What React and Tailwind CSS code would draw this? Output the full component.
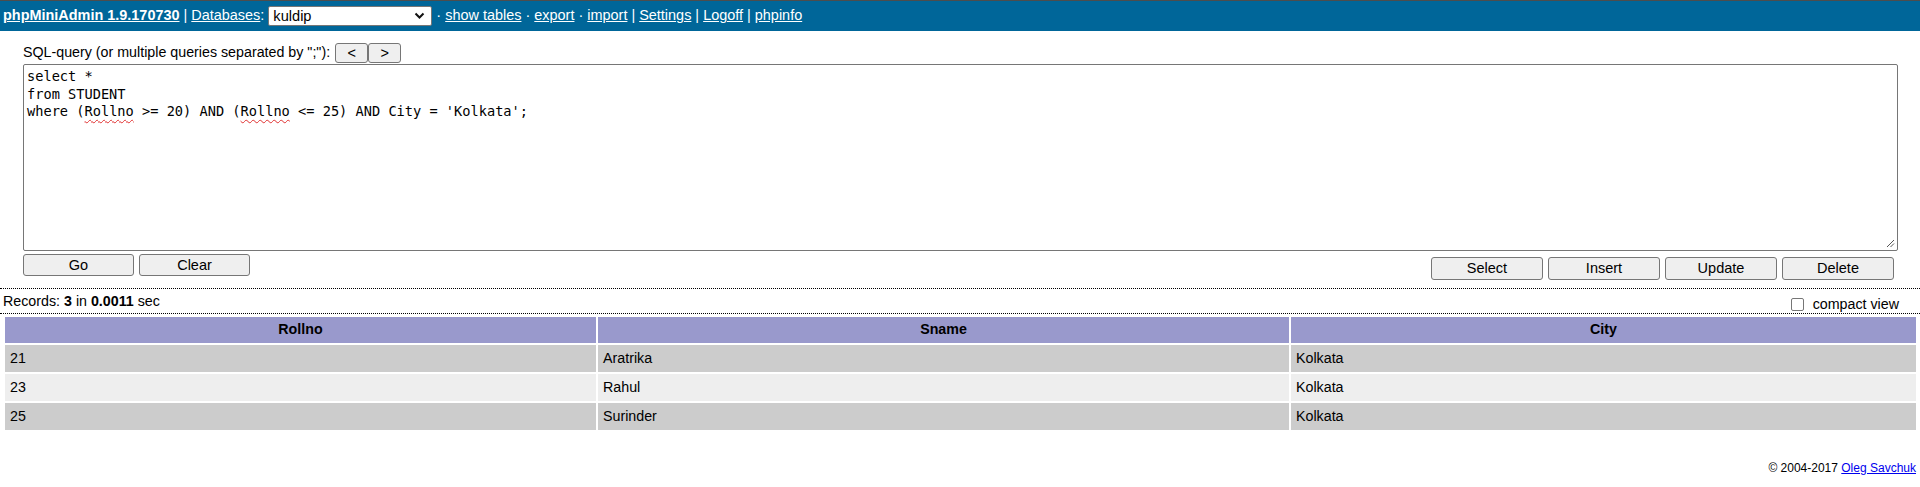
export default function App() {
  const rows = [
    ["21", "Aratrika", "Kolkata", "bg-[#cccccc]"],
    ["23", "Rahul", "Kolkata", "bg-[#eeeeee]"],
    ["25", "Surinder", "Kolkata", "bg-[#cccccc]"],
  ];
  const btn =
    "flex items-center justify-center bg-[#efefef] border border-[#767676] rounded-[3px] text-black text-[14.5px] leading-none";
  const spell = "underline decoration-wavy decoration-[#e03030] decoration-[1px] underline-offset-[3px]";
  return (
    <div className="min-h-[487px] bg-white text-black text-[14.25px] font-['Liberation_Sans',Arial,sans-serif]">
      {/* header bar */}
      <div className="h-[31px] border-t border-[#4d4d4d] bg-[#006699] text-white pl-[3px] leading-[29px] whitespace-nowrap text-[14.45px]">
        <a href="#" className="font-bold underline">phpMiniAdmin 1.9.170730</a> | <a href="#" className="underline">Databases</a>: <span className="relative inline-block align-middle h-[20px] w-[164px] bg-white border border-[#767676] rounded-[2px] text-black text-[14.6px] leading-[18px] pl-[4px]">kuldip<svg className="absolute right-[6px] top-[5px]" width="11" height="8" viewBox="0 0 11 8"><polyline points="1.5,1.5 5.5,5.5 9.5,1.5" fill="none" stroke="#111" strokeWidth="2" /></svg></span> · <a href="#" className="underline">show tables</a> · <a href="#" className="underline">export</a> · <a href="#" className="underline">import</a> | <a href="#" className="underline">Settings</a> | <a href="#" className="underline">Logoff</a> | <a href="#" className="underline">phpinfo</a>
      </div>

      {/* query form */}
      <div className="pl-[23px] pr-[22px] pt-[12px] pb-[8px] border-b border-dotted border-black">
        <div className="flex items-center h-[20px]">
          <span className="mr-[5px]">SQL-query (or multiple queries separated by ";"):</span>
          <div className={btn + " w-[33px] h-[20px] text-[13px]"}>&lt;</div>
          <div className={btn + " w-[33px] h-[20px] text-[13px]"}>&gt;</div>
        </div>
        <div className="relative mt-[1px] h-[187px] border border-[#767676] rounded-[2px] px-[3px] pt-[3px] font-['DejaVu_Sans_Mono',monospace] text-[13.65px] leading-[17.6px] whitespace-pre text-black">
          <div>select *</div>
          <div>from STUDENT</div>
          <div>
            where (<span className={spell}>Rollno</span> &gt;= 20) AND (<span className={spell}>Rollno</span> &lt;= 25) AND City = 'Kolkata';
          </div>
          <svg className="absolute right-[2px] bottom-[2px]" width="10" height="10" viewBox="0 0 10 10">
            <line x1="2" y1="9" x2="9" y2="2" stroke="#555" strokeWidth="1" />
            <line x1="5.5" y1="9" x2="9" y2="5.5" stroke="#555" strokeWidth="1" />
          </svg>
        </div>
        <div className="flex justify-between items-start mt-[3px] h-[26px]">
          <div className="flex gap-[5px]">
            <div className={btn + " w-[111px] h-[22px]"}>Go</div>
            <div className={btn + " w-[111px] h-[22px]"}>Clear</div>
          </div>
          <div className="flex gap-[5px] mt-[3px] mr-[4px]">
            <div className={btn + " w-[112px] h-[23px]"}>Select</div>
            <div className={btn + " w-[112px] h-[23px]"}>Insert</div>
            <div className={btn + " w-[112px] h-[23px]"}>Update</div>
            <div className={btn + " w-[112px] h-[23px]"}>Delete</div>
          </div>
        </div>
      </div>

      {/* records line */}
      <div className="flex justify-between items-start h-[25px] border-b border-dotted border-black">
        <div className="pl-[3px] pt-[4px] leading-[16px]">
          Records: <b>3</b> in <b>0.0011</b> sec
        </div>
        <div className="flex items-center mt-[7px] pr-[21px] leading-[16px]">
          <span className="inline-block w-[13px] h-[13px] border border-[#767676] rounded-[2px] bg-white mr-[9px]"></span>
          <span>compact view</span>
        </div>
      </div>

      {/* results table */}
      <div className="pl-[5px] pt-[3px]">
        <div className="grid grid-cols-[591px_691px_625px] gap-[2px]">
          <div className="h-[26px] bg-[#9999cc] flex items-center justify-center font-bold">Rollno</div>
          <div className="h-[26px] bg-[#9999cc] flex items-center justify-center font-bold">Sname</div>
          <div className="h-[26px] bg-[#9999cc] flex items-center justify-center font-bold">City</div>
          {rows.map((r) => (
            <div key={r[0]} className="contents">
              <div className={"h-[27px] flex items-center pl-[5px] " + r[3]}>{r[0]}</div>
              <div className={"h-[27px] flex items-center pl-[5px] " + r[3]}>{r[1]}</div>
              <div className={"h-[27px] flex items-center pl-[5px] " + r[3]}>{r[2]}</div>
            </div>
          ))}
        </div>
      </div>

      {/* footer */}
      <div className="text-right pr-[4px] mt-[31px] text-[12px] leading-[14px]">
        © 2004-2017 <a href="#" className="text-[#0000ee] underline">Oleg Savchuk</a>
      </div>
    </div>
  );
}
